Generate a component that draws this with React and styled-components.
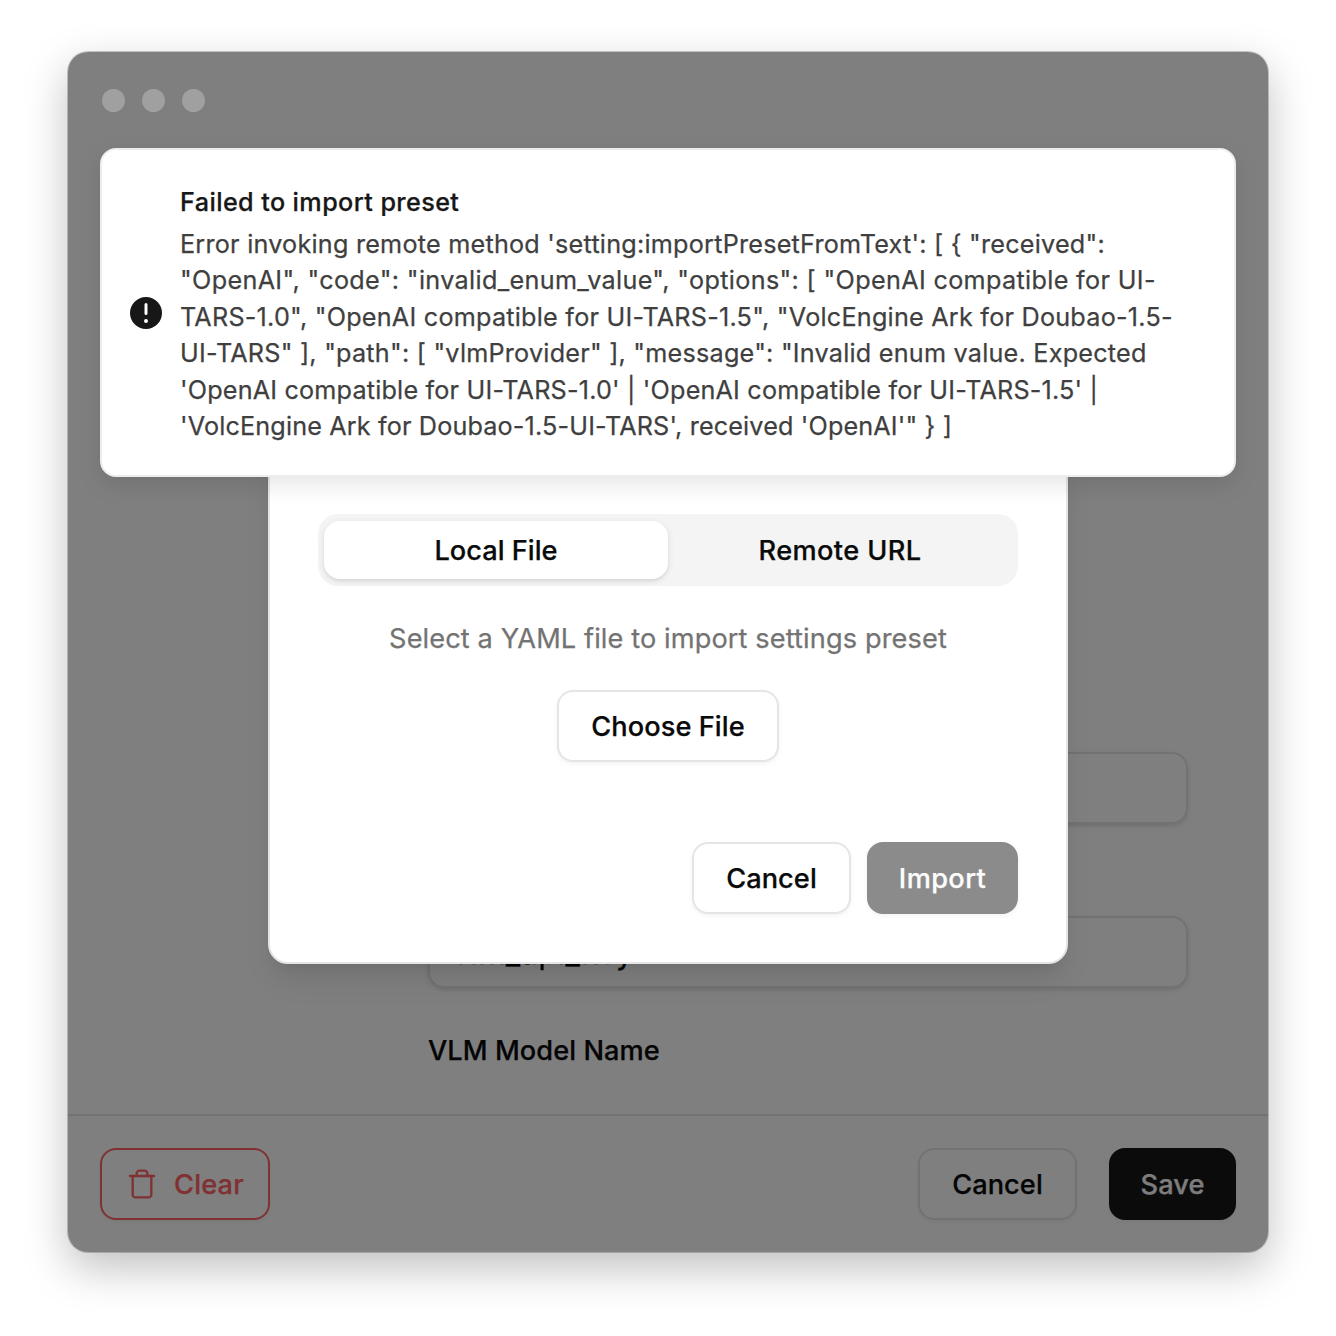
import React from 'react';
import styled, { createGlobalStyle } from 'styled-components';

const GlobalStyle = createGlobalStyle`
  *, *::before, *::after { box-sizing: border-box; }
  body {
    margin: 0;
    background: #fff;
    font-family: Inter, "Liberation Sans", sans-serif;
    color: #0a0a0a;
    -webkit-font-smoothing: antialiased;
    -webkit-text-stroke: 0.25px currentColor;
  }
`;

const Desktop = styled.main`
  width: 1336px;
  height: 1336px;
  padding: 52px 68px 84px;
  overflow: hidden;
`;

const Window = styled.section`
  position: relative;
  display: flex;
  flex-direction: column;
  height: 1200px;
  border-radius: 20px;
  background: #fff;
  box-shadow: 0 0 0 1px rgba(0, 0, 0, 0.2), 0 16px 44px rgba(0, 0, 0, 0.25);
`;

const SettingsForm = styled.div`
  flex: 1;
  display: flex;
  flex-direction: column;
  justify-content: flex-end;
  gap: 92px;
  padding: 0 80px 50px 360px;
`;

const Field = styled.div`
  display: flex;
  flex-direction: column;
  gap: 48px;
`;

const Label = styled.label`
  height: 28px;
  padding-top: 1px;
  font-size: 27.2px;
  font-weight: 500;
  line-height: 28px;
  letter-spacing: 0.06px;
  color: #0a0a0a;
`;

const Input = styled.div`
  height: 72px;
  padding: 1px 22px 0;
  border: 2px solid #e5e5e5;
  border-radius: 16px;
  box-shadow: 0 2px 6px rgba(0, 0, 0, 0.1), 0 2px 4px -2px rgba(0, 0, 0, 0.1);
  font-size: 31.5px;
  line-height: 68px;
  letter-spacing: 0.2px;
`;

const WindowFooter = styled.footer`
  display: flex;
  justify-content: space-between;
  height: 138px;
  padding: 32px;
  border-top: 2px solid #e5e5e5;
`;

const Actions = styled.div`
  display: flex;
  justify-content: flex-end;
  gap: ${(p) => p.$gap}px;
`;

const palette = {
  outline: { bg: '#fff', fg: '#0a0a0a', line: '#e5e5e5' },
  solid: { bg: '#171717', fg: '#fafafa', line: '#171717' },
  disabled: { bg: '#8b8b8b', fg: '#fdfdfd', line: '#8b8b8b' },
  danger: { bg: 'transparent', fg: '#ff6266', line: '#ff6266' },
};

const Button = styled.button`
  display: flex;
  align-items: center;
  justify-content: center;
  gap: 16px;
  width: ${(p) => p.$width}px;
  height: 72px;
  padding: 0;
  border: 2px solid ${(p) => palette[p.$tone].line};
  border-radius: 16px;
  background: ${(p) => palette[p.$tone].bg};
  color: ${(p) => palette[p.$tone].fg};
  box-shadow: 0 2px 4px rgba(0, 0, 0, 0.05);
  font: 500 27.2px/40px Inter, "Liberation Sans", sans-serif;
  letter-spacing: ${(p) => (p.$tracking === undefined ? 0.08 : p.$tracking)}px;
`;

const Caption = styled.span`
  padding-top: 2px;
`;

const Backdrop = styled.div`
  position: absolute;
  inset: 0;
  border-radius: 20px;
  background: rgba(0, 0, 0, 0.5);
`;

const TrafficLights = styled.div`
  position: absolute;
  top: 36.5px;
  left: 34.2px;
  display: flex;
  gap: 17px;
`;

const Light = styled.i`
  width: 23px;
  height: 23px;
  border-radius: 50%;
  background: #a0a0a0;
`;

const Dialog = styled.div`
  position: absolute;
  top: 288px;
  left: 200px;
  display: flex;
  flex-direction: column;
  width: 800px;
  height: 624px;
  padding: 172px 48px 48px;
  border: 2px solid #e5e5e5;
  border-radius: 20px;
  background: #fff;
  box-shadow: 0 20px 30px -6px rgba(0, 0, 0, 0.1), 0 8px 12px -8px rgba(0, 0, 0, 0.1);
`;

const Tabs = styled.div`
  display: grid;
  grid-template-columns: 1fr 1fr;
  flex: none;
  height: 72px;
  padding: 7px 6px;
  border-radius: 20px;
  background: #f4f4f4;
`;

const Tab = styled.div`
  display: flex;
  align-items: center;
  justify-content: center;
  border-radius: 16px;
  background: ${(p) => (p.$active ? '#fff' : 'transparent')};
  box-shadow: ${(p) =>
    p.$active ? '0 2px 6px rgba(0,0,0,.1), 0 2px 4px -2px rgba(0,0,0,.1)' : 'none'};
  font-size: 27.2px;
  font-weight: 500;
  letter-spacing: ${(p) => p.$tracking}px;
`;

const FilePanel = styled.div`
  flex: 1;
  display: flex;
  flex-direction: column;
  align-items: center;
  gap: 32px;
  padding-top: 32px;
`;

const Hint = styled.p`
  height: 40px;
  margin: 0;
  padding-top: 1px;
  font-size: 27.2px;
  line-height: 40px;
  letter-spacing: 0.1px;
  color: #737373;
`;

const Toast = styled.div`
  position: absolute;
  top: 96px;
  left: 32px;
  display: flex;
  align-items: center;
  gap: 14px;
  width: 1136px;
  height: 329px;
  padding: 0 32px 0 24px;
  border: 2px solid #ededed;
  border-radius: 16px;
  background: #fff;
  box-shadow: 0 8px 24px rgba(0, 0, 0, 0.1);
`;

const ToastBody = styled.div`
  display: flex;
  flex-direction: column;
  gap: 4px;
  padding-top: 2.4px;
`;

const ToastTitle = styled.div`
  font-size: 25.2px;
  font-weight: 500;
  line-height: 39px;
  letter-spacing: 0.4px;
  color: #171717;
`;

const ToastText = styled.div`
  font-size: 25.2px;
  line-height: 36.4px;
  color: #3f3f3f;
`;

const Line = styled.span`
  display: block;
  white-space: pre;
  letter-spacing: ${(p) => p.$tracking}px;
`;

const errorLines = [
  [`Error invoking remote method 'setting:importPresetFromText': [ { "received":`, 0.23],
  [`"OpenAI", "code": "invalid_enum_value", "options": [ "OpenAI compatible for UI-`, 0.335],
  [`TARS-1.0", "OpenAI compatible for UI-TARS-1.5", "VolcEngine Ark for Doubao-1.5-`, 0.23],
  [`UI-TARS" ], "path": [ "vlmProvider" ], "message": "Invalid enum value. Expected`, 0.225],
  [`'OpenAI compatible for UI-TARS-1.0' | 'OpenAI compatible for UI-TARS-1.5' |`, 0.185],
  [`'VolcEngine Ark for Doubao-1.5-UI-TARS', received 'OpenAI'" } ]`, 0.15],
];

const TrashIcon = () => (
  <svg width="32" height="32" viewBox="0 0 24 24" fill="none" stroke="currentColor" strokeWidth="1.75" strokeLinecap="round" strokeLinejoin="round">
    <path d="M3 6h18" />
    <path d="M19 6v14c0 1-1 2-2 2H7c-1 0-2-1-2-2V6" />
    <path d="M8 6V4c0-1 1-2 2-2h4c1 0 2 1 2 2v2" />
  </svg>
);

const ErrorIcon = () => (
  <svg width="40" height="40" viewBox="0 0 20 20" fill="#171717">
    <path
      fillRule="evenodd"
      clipRule="evenodd"
      d="M18 10a8 8 0 11-16 0 8 8 0 0116 0zm-8-5a.75.75 0 01.75.75v4.5a.75.75 0 01-1.5 0v-4.5A.75.75 0 0110 5zm0 10a1 1 0 100-2 1 1 0 000 2z"
    />
  </svg>
);

export default function App() {
  return (
    <Desktop>
      <GlobalStyle />
      <Window>
        <SettingsForm>
          <Input />
          <Field>
            <Input>vlm_api_key</Input>
            <Label>VLM Model Name</Label>
          </Field>
        </SettingsForm>
        <WindowFooter>
          <Button $tone="danger" $width={170} $tracking={0.2}>
            <TrashIcon />
            <Caption>Clear</Caption>
          </Button>
          <Actions $gap={32}>
            <Button $tone="outline" $width={159}><Caption>Cancel</Caption></Button>
            <Button $tone="solid" $width={127}><Caption>Save</Caption></Button>
          </Actions>
        </WindowFooter>

        <Backdrop />
        <TrafficLights>
          <Light />
          <Light />
          <Light />
        </TrafficLights>

        <Dialog>
          <Tabs>
            <Tab $active $tracking={0}>Local File</Tab>
            <Tab $tracking={0.38}>Remote URL</Tab>
          </Tabs>
          <FilePanel>
            <Hint>Select a YAML file to import settings preset</Hint>
            <Button $tone="outline" $width={222}><Caption>Choose File</Caption></Button>
          </FilePanel>
          <Actions $gap={16}>
            <Button $tone="outline" $width={159}><Caption>Cancel</Caption></Button>
            <Button $tone="disabled" $width={151} $tracking={0.38}><Caption>Import</Caption></Button>
          </Actions>
        </Dialog>

        <Toast>
          <ErrorIcon />
          <ToastBody>
            <ToastTitle>Failed to import preset</ToastTitle>
            <ToastText>
              {errorLines.map(([text, tracking]) => (
                <Line key={text} $tracking={tracking}>{text}</Line>
              ))}
            </ToastText>
          </ToastBody>
        </Toast>
      </Window>
    </Desktop>
  );
}
